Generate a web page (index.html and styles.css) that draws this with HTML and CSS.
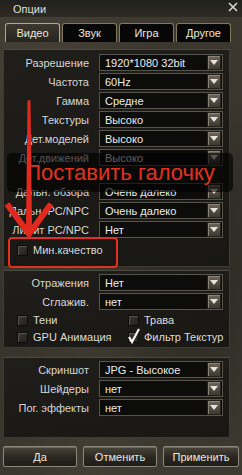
FILE: index.html
```html
<!DOCTYPE html>
<html>
<head>
    <title>Опции</title>
    <link rel="stylesheet" href="styles.css">
</head>
<body>
    <div class="window">
        <div class="titlebar">
            <span class="title">Опции</span>
            <svg class="close" width="10" height="10" viewBox="0 0 10 10">
                <path d="M1 1 L9 9 M9 1 L1 9" stroke="#d8d6cf" stroke-width="1.6" fill="none"/>
            </svg>
        </div>

        <div class="tabs">
            <div class="tab active">Видео</div>
            <div class="tab">Звук</div>
            <div class="tab">Игра</div>
            <div class="tab">Другое</div>
        </div>

        <div class="panel panel-main">
            <div class="row"><span class="lbl">Разрешение</span><div class="select"><span>1920*1080 32bit</span><i class="drop"></i></div></div>
            <div class="row"><span class="lbl">Частота</span><div class="select"><span>60Hz</span><i class="drop"></i></div></div>
            <div class="row"><span class="lbl">Гамма</span><div class="select"><span>Средне</span><i class="drop"></i></div></div>
            <div class="row"><span class="lbl">Текстуры</span><div class="select"><span>Высоко</span><i class="drop"></i></div></div>
            <div class="row"><span class="lbl">Дет.моделей</span><div class="select"><span>Высоко</span><i class="drop"></i></div></div>
            <div class="row"><span class="lbl">Дет.движений</span><div class="select"><span>Высоко</span><i class="drop"></i></div></div>
            <div class="row row-after-hint"><span class="lbl">Дальн. обзора</span><div class="select"><span>Очень далеко</span><i class="drop"></i></div></div>
            <div class="row"><span class="lbl">Дальн. PC/NPC</span><div class="select"><span>Очень далеко</span><i class="drop"></i></div></div>
            <div class="row"><span class="lbl">Лимит PC/NPC</span><div class="select"><span>Нет</span><i class="drop"></i></div></div>
            <div class="check check-single"><span class="cb"></span>Мин.качество</div>
        </div>

        <div class="panel panel-fx">
            <div class="row"><span class="lbl">Отражения</span><div class="select"><span>Нет</span><i class="drop"></i></div></div>
            <div class="row"><span class="lbl">Сглажив.</span><div class="select"><span>нет</span><i class="drop"></i></div></div>
            <div class="check-grid">
                <div class="check"><span class="cb"></span>Тени</div>
                <div class="check"><span class="cb"></span>Трава</div>
                <div class="check"><span class="cb"></span>GPU Анимация</div>
                <div class="check"><span class="cb"><svg width="14" height="16" viewBox="0 0 14 16"><path d="M2 9 L5 14 L12 1" stroke="#f4f4f2" stroke-width="2.2" fill="none"/></svg></span>Фильтр Текстур</div>
            </div>
        </div>

        <div class="panel panel-shot">
            <div class="row"><span class="lbl">Скриншот</span><div class="select"><span>JPG - Высокое</span><i class="drop"></i></div></div>
            <div class="row"><span class="lbl">Шейдеры</span><div class="select"><span>нет</span><i class="drop"></i></div></div>
            <div class="row"><span class="lbl">Пог. эффекты</span><div class="select"><span>нет</span><i class="drop"></i></div></div>
        </div>

        <div class="buttons">
            <button class="btn">Да</button>
            <button class="btn">Отменить</button>
            <button class="btn btn-wide">Применить</button>
        </div>

        <!-- annotation drawn over the window -->
        <div class="hint">Поставить галочку</div>
        <div class="mark"></div>
        <svg class="arrow" width="60" height="242" viewBox="0 0 60 242">
            <path d="M27.5 101 Q29 99 30.5 101 L32 230 L26 230 Z" fill="#e2291d"/>
            <path d="M7 204 L29 234 L51 204" stroke="#e2291d" stroke-width="6" fill="none" stroke-linejoin="miter"/>
        </svg>
    </div>
</body>
</html>
```

FILE: styles.css
```css
* {
    box-sizing: border-box;
}

body {
    margin: 0;
    background-color: #2a2823;
    font-family: "Liberation Sans", Arial, sans-serif;
}

.window {
    position: relative;
    width: 242px;
    height: 475px;
    overflow: hidden;
    display: flex;
    flex-direction: column;
    background-color: #3c3930;
    background-image:
        radial-gradient(ellipse at 20% 30%, rgba(90, 84, 70, 0.35), transparent 40%),
        radial-gradient(ellipse at 80% 60%, rgba(25, 23, 19, 0.35), transparent 45%),
        radial-gradient(ellipse at 40% 90%, rgba(80, 76, 62, 0.3), transparent 40%),
        linear-gradient(160deg, #403c33, #35322b 50%, #3d3a31);
}

.titlebar {
    height: 17px;
    display: flex;
    align-items: center;
    justify-content: space-between;
    padding: 0 4px 0 13px;
    background: linear-gradient(#22201c, #2e2b25);
    color: #e2dfd5;
    font-size: 11px;
}

.close {
    margin-bottom: 3px;
}

.tabs {
    display: flex;
    gap: 2px;
    margin: 6px 0 0 5px;
    height: 19px;
}

.tab {
    width: 55px;
    display: flex;
    align-items: center;
    justify-content: center;
    background-color: #070707;
    border: 1px solid #857856;
    border-bottom: none;
    border-radius: 3px 3px 0 0;
    color: #efe7cf;
    font-size: 11px;
}

.tab.active {
    background: linear-gradient(#3b3830, #26241f);
    border-color: #b0a88f;
}

.panel {
    margin: 0 12px 0 3px;
    background-color: #1c1b18;
    background-image: linear-gradient(170deg, #1f1e1a, #181714);
    border: 1px solid #3e3b34;
    border-top-color: #4d493f;
    display: flex;
    flex-direction: column;
    gap: 2px;
}

.panel-main {
    margin-top: 7px;
    height: 218px;
    padding-top: 4px;
}

.panel-fx {
    margin-top: 3px;
    height: 78px;
    padding-top: 3px;
}

.panel-shot {
    margin-top: 9px;
    height: 81px;
    padding-top: 3px;
}

.row {
    display: flex;
    align-items: center;
    height: 17px;
    flex-shrink: 0;
}

.row-after-hint {
    margin-top: 15px;
}

.lbl {
    width: 85px;
    margin-right: 10px;
    text-align: right;
    color: #d6d6d4;
    font-size: 11px;
    white-space: nowrap;
}

.select {
    width: 124px;
    height: 17px;
    display: flex;
    align-items: center;
    justify-content: space-between;
    padding: 0 1px 0 5px;
    background-color: #0c0c0b;
    border: 1px solid #57544c;
    color: #ececea;
    font-size: 11px;
}

.drop {
    position: relative;
    width: 14px;
    height: 15px;
    background: linear-gradient(#6f675a, #4f493e 60%, #3e3931);
    border: 1px solid #24211c;
    box-shadow: inset 1px 1px 0 #8a8272;
}

.drop::after {
    content: "";
    position: absolute;
    left: 2px;
    top: 4px;
    border-left: 4px solid transparent;
    border-right: 4px solid transparent;
    border-top: 5px solid #e6e4de;
}

.check {
    display: flex;
    align-items: center;
    height: 14px;
    color: #dcdcda;
    font-size: 11px;
    white-space: nowrap;
}

.cb {
    position: relative;
    width: 11px;
    height: 11px;
    margin-right: 5px;
    background: linear-gradient(135deg, #3a3936, #222120);
    border: 1px solid #0c0c0b;
    box-shadow: inset 1px 1px 0 #55534e;
}

.cb svg {
    position: absolute;
    left: -2px;
    top: -5px;
}

.check-single {
    margin: 3px 0 0 13px;
}

.check-grid {
    display: grid;
    grid-template-columns: 111px 1fr;
    row-gap: 3px;
    margin: 1px 0 0 13px;
}

.buttons {
    display: flex;
    gap: 6px;
    margin: 8px 0 0 3px;
}

.btn {
    width: 74px;
    height: 21px;
    padding: 0;
    background: linear-gradient(#4a453b, #2a2720 55%, #1f1d19);
    border: 1px solid #8e887a;
    border-radius: 2px;
    box-shadow: inset 0 1px 0 #6e685a;
    color: #ebe8de;
    font-family: "Liberation Sans", Arial, sans-serif;
    font-size: 11px;
}

.btn-wide {
    width: 76px;
}

.hint {
    position: absolute;
    left: 7px;
    top: 153px;
    width: 226px;
    height: 39px;
    background-color: rgba(0, 0, 0, 0.62);
    border-radius: 5px;
    color: #e4311f;
    font-family: "Liberation Sans", Arial, sans-serif;
    font-size: 22px;
    line-height: 40px;
    text-align: center;
}

.mark {
    position: absolute;
    left: 8px;
    top: 237px;
    width: 110px;
    height: 31px;
    border: 2px solid #e2321f;
    border-radius: 4px;
}

.arrow {
    position: absolute;
    left: 0;
    top: 0;
}
```
